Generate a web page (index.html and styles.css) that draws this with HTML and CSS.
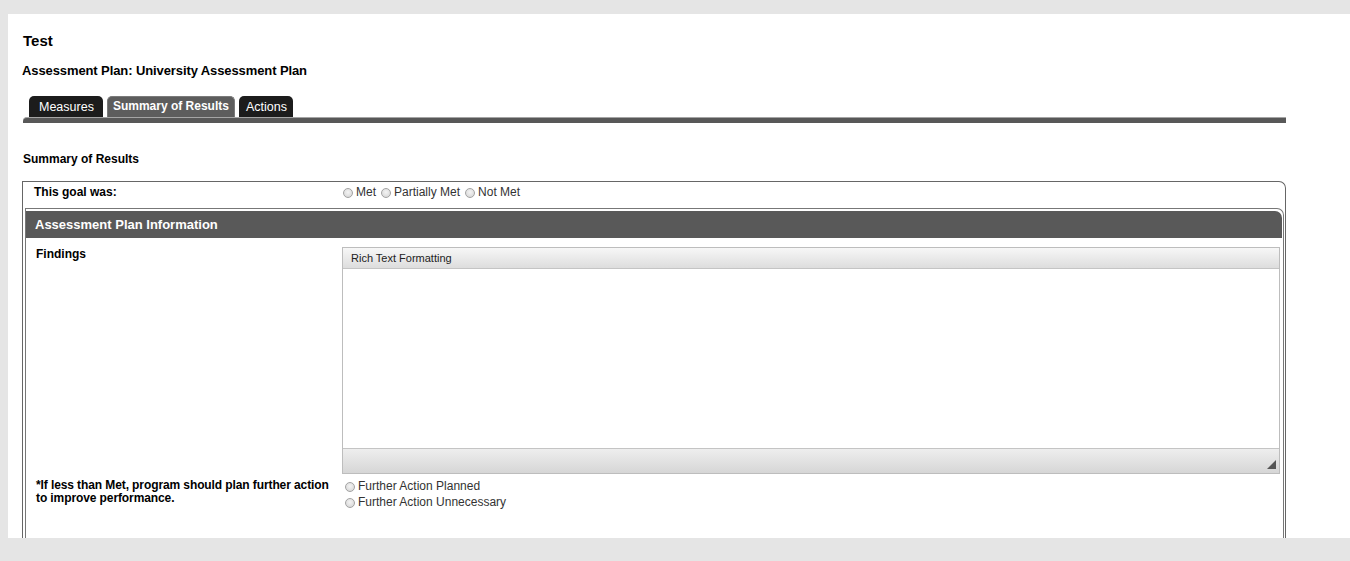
FILE: index.html
```
<html>
    <head>
        <title>Summary of Results</title>
        <link rel="stylesheet" href="styles.css">
    </head>
    <body>
        <div class="page">
            <h1 class="title">Test</h1>
            <h2 class="plan-name">Assessment Plan: University Assessment Plan</h2>

            <div class="tabs">
                <a class="tab tab-measures">Measures</a>
                <a class="tab tab-active">Summary of Results</a>
                <a class="tab tab-actions">Actions</a>
            </div>
            <div class="tab-line"></div>

            <h3 class="section-title">Summary of Results</h3>

            <div class="outer-panel">
                <div class="goal-row">
                    <div class="field-label">This goal was:</div>
                    <div class="radio-inline">
                        <label class="radio"><input type="radio" name="goal"> Met</label>
                        <label class="radio"><input type="radio" name="goal"> Partially Met</label>
                        <label class="radio"><input type="radio" name="goal"> Not Met</label>
                    </div>
                </div>

                <div class="info-panel">
                    <div class="info-header">Assessment Plan Information</div>

                    <div class="info-row">
                        <div class="field-label">Findings</div>
                        <div class="editor">
                            <div class="editor-toolbar">Rich Text Formatting</div>
                            <div class="editor-body"></div>
                            <div class="editor-footer"><span class="resize-grip"></span></div>
                        </div>
                    </div>

                    <div class="info-row action-row">
                        <div class="field-label">*If less than Met, program should plan further action to improve performance.</div>
                        <div class="radio-stack">
                            <label class="radio"><input type="radio" name="action"> Further Action Planned</label>
                            <label class="radio"><input type="radio" name="action"> Further Action Unnecessary</label>
                        </div>
                    </div>
                </div>
            </div>
        </div>
    </body>
</html>
```

FILE: styles.css
```
body{
    margin: 0;
    background-color: #e5e5e5;
    font-family: "Liberation Sans", Arial, sans-serif;
    color: #000;
}

.page{
    background-color: #fff;
    margin: 14px 0 0 8px;
    height: 524px;
    overflow: hidden;
    padding: 18px 64px 0 14px;
    box-sizing: border-box;
}

.title{
    font-size: 15px;
    line-height: 18px;
    margin: 0 0 0 1px;
}
.plan-name{
    font-size: 13px;
    line-height: 16px;
    margin: 13px 0 0 0;
    letter-spacing: -0.1px;
}

/* tabs */
.tabs{
    display: flex;
    gap: 4px;
    margin-top: 17px;
    padding-left: 7px;
    height: 21px;
    align-items: flex-end;
}
.tab{
    height: 21px;
    line-height: 22px;
    padding: 0 9px;
    background-color: #1c1c1c;
    color: #fff;
    font-size: 12.5px;
    border-radius: 5px 5px 0 0;
    box-sizing: border-box;
}
.tab-measures{
    padding: 0 9px 0 10px;
}
.tab-actions{
    padding: 0 6px 0 7px;
}
.tab-active{
    background-color: #5d5d5d;
    font-weight: bold;
    font-size: 12px;
    line-height: 19px;
    padding: 0 5px;
    border: 1px solid #7a7a7a;
    border-bottom: none;
}
.tab-line{
    height: 5px;
    margin-left: 1px;
    background-color: #585858;
    border-top: 1px solid #a5a5a5;
    border-radius: 4px 0 0 0;
}

.section-title{
    font-size: 12px;
    line-height: 15px;
    margin: 29px 0 0 1px;
}

/* panels */
.outer-panel{
    margin-top: 14px;
    border: 1px solid #666;
    border-bottom: none;
    border-radius: 0 7px 0 0;
    padding: 0 1px 0 2px;
}
.goal-row{
    display: grid;
    grid-template-columns: 309px 1fr;
    padding: 3px 0 8px 9px;
    line-height: 15px;
}
.field-label{
    font-size: 12px;
    font-weight: bold;
}
.info-panel{
    border: 1px solid #777;
    border-bottom: none;
    border-radius: 0 7px 0 0;
    padding: 2px 1px 40px 0;
}
.info-header{
    background-color: #595959;
    color: #fff;
    font-size: 13px;
    font-weight: bold;
    height: 27px;
    line-height: 27px;
    padding-left: 9px;
    border-radius: 0 7px 0 0;
}
.info-row{
    display: grid;
    grid-template-columns: 316px 1fr;
    padding: 8px 2px 0 0;
}
.info-row .field-label{
    padding: 1px 0 0 10px;
    line-height: 15px;
}
.action-row{
    padding-top: 4px;
}
.action-row .field-label{
    line-height: 13px;
    padding-top: 1px;
    letter-spacing: -0.1px;
}

/* editor */
.editor{
    margin-top: 1px;
    border: 1px solid #bdbdbd;
}
.editor-toolbar{
    height: 20px;
    line-height: 21px;
    font-size: 11px;
    color: #222;
    padding-left: 8px;
    background: linear-gradient(#f7f7f7, #dddddd);
    border-bottom: 1px solid #c4c4c4;
}
.editor-body{
    height: 179px;
    background-color: #fff;
    border-bottom: 1px solid #c4c4c4;
}
.editor-footer{
    height: 24px;
    background: linear-gradient(#eeeeee, #d6d6d6);
    display: flex;
    justify-content: flex-end;
    align-items: flex-end;
}
.resize-grip{
    width: 0;
    height: 0;
    border-left: 9px solid transparent;
    border-bottom: 9px solid #555;
    margin: 0 3px 4px 0;
}

/* radios */
.radio{
    font-size: 12px;
    color: #333;
    display: inline-flex;
    align-items: center;
}
.radio input{
    appearance: none;
    -webkit-appearance: none;
    width: 10px;
    height: 10px;
    margin: 1px 3px 0 0;
    border-radius: 50%;
    border: 1px solid #a3a3a3;
    background: radial-gradient(circle at 50% 40%, #f4f4f4, #d2d2d2);
    box-sizing: border-box;
}
.radio-inline{
    display: flex;
    gap: 5px;
}
.radio-stack{
    display: flex;
    flex-direction: column;
    padding-left: 3px;
    line-height: 16px;
}
```
